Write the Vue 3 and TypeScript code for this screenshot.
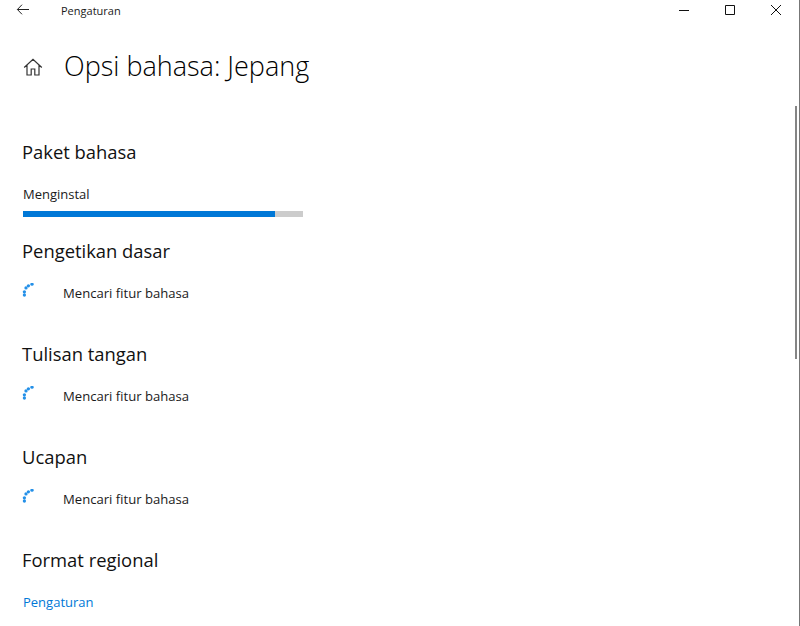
<script setup lang="ts">
const sections = ['Pengetikan dasar', 'Tulisan tangan', 'Ucapan']
const dots = [
  [2.4, 12], [2.4, 8.8], [4, 4.9], [6.4, 2.8], [10, 1.2],
]
</script>

<template>
  <div class="window">
    <header class="titlebar">
      <svg class="back" width="16" height="16" viewBox="0 0 16 16" fill="none" stroke="#222" stroke-width="1">
        <path d="M1.400 7.500H13M6 2.700 1.400 7.500 6 12.300" />
      </svg>
      <span class="app-name">Pengaturan</span>
      <div class="controls">
        <svg width="12" height="12" viewBox="0 0 12 12" fill="none" stroke="#111"><path d="M1 6.500h10" /></svg>
        <svg width="12" height="12" viewBox="0 0 12 12" fill="none" stroke="#111"><path d="M1.500 1.500h9v9h-9z" /></svg>
        <svg width="12" height="12" viewBox="0 0 12 12" fill="none" stroke="#111"><path d="m1 1 10 10M11 1 1 11" /></svg>
      </div>
    </header>

    <div class="page-head">
      <svg class="home" width="20" height="20" viewBox="0 0 20 20" fill="none" stroke="#333" stroke-width="1.200">
        <path d="M1.200 10.500 10 2.200l8.800 8.300M4 8v10h4.200v-6h3.600v6H16V8" />
      </svg>
      <h1>Opsi bahasa: Jepang</h1>
    </div>

    <main class="content">
      <h2 class="first">Paket bahasa</h2>
      <div class="status">Menginstal</div>
      <div class="progress"><div class="bar" :style="{ width: '90%' }"></div></div>

      <section v-for="s in sections" :key="s">
        <h2>{{ s }}</h2>
        <div class="row">
          <svg class="spinner" width="14" height="14" viewBox="0 0 14 14" fill="#2490e8">
            <circle v-for="(d, i) in dots" :key="i" :cx="d[0]" :cy="d[1]" r="1.650" />
          </svg>
          <span>Mencari fitur bahasa</span>
        </div>
      </section>

      <h2 class="last">Format regional</h2>
      <a class="link">Pengaturan</a>
    </main>

    <div class="scroll-thumb"></div>
    <div class="edge"></div>
  </div>
</template>

<style>
html, body { margin: 0; background: #fff; overflow: hidden; }
</style>

<style scoped>
.window {
  position: relative;
  width: 800px;
  height: 626px;
  overflow: hidden;
  background: #fff;
  color: #1a1a1a;
  font-family: "Open Sans", "Noto Sans", sans-serif;
}
.titlebar {
  display: flex;
  align-items: center;
  height: 20px;
  padding-left: 16px;
}
.app-name { margin-left: 29px; font-size: 11px; }
.controls {
  display: flex;
  gap: 34px;
  margin-left: auto;
  margin-right: 18px;
}
.page-head {
  display: flex;
  align-items: center;
  margin-top: 27px;
  padding-left: 23px;
  height: 38px;
}
.home { margin-top: 2px; }
h1 { margin: 0 0 0 21px; font-size: 27px; font-weight: 300; line-height: 38px; color: #000; }
.content { padding: 0 0 0 22px; }
h2 { margin: 0; font-size: 18.4px; font-weight: 400; line-height: 26px; color: #111; }
h2.first { margin-top: 54px; }
.status { margin: 19px 0 0 1px; font-size: 13px; line-height: 20px; }
.progress {
  width: 280px;
  height: 6px;
  margin: 7px 0 0 1px;
  background: #ccc;
}
.bar { height: 100%; background: #0078d7; }
section { margin-bottom: 38px; }
section:first-of-type { margin-top: 21px; }
.row {
  display: flex;
  align-items: center;
  height: 20px;
  margin-top: 19px;
  font-size: 13.1px;
}
.spinner { margin-right: 27px; margin-top: -6px; }
h2.last { margin-top: 0; }
.link { display: block; margin: 19px 0 0 1px; color: #0078d7; font-size: 13px; line-height: 20px; }
.scroll-thumb {
  position: absolute;
  top: 106px;
  left: 795px;
  width: 2px;
  height: 253px;
  background: #858585;
}
.edge {
  position: absolute;
  top: 0;
  right: 0;
  width: 1px;
  height: 100%;
  background: #777;
}
</style>
